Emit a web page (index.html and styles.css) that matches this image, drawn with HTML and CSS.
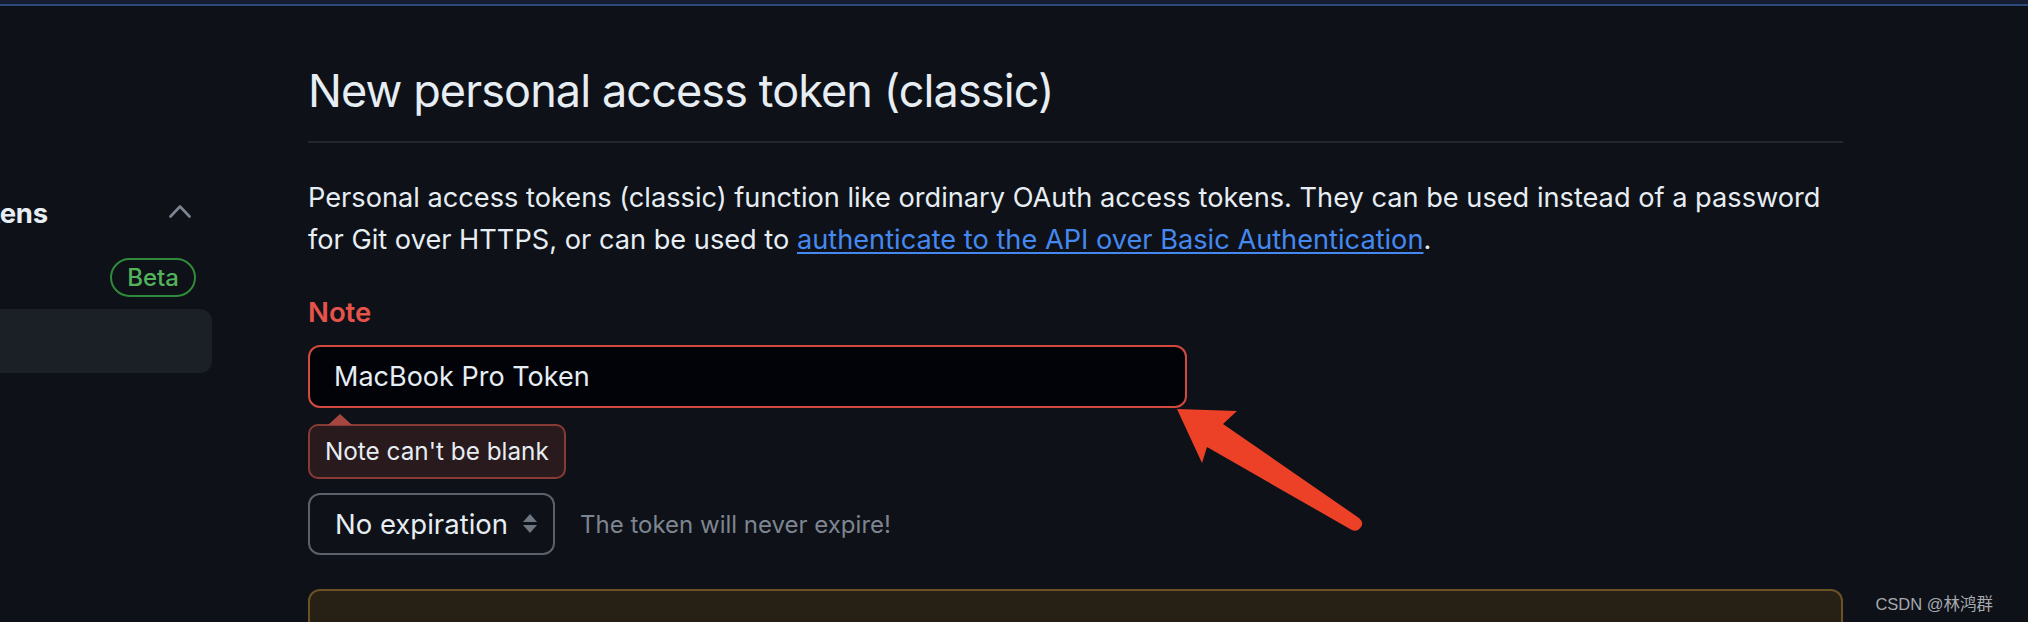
FILE: index.html
```html
<!DOCTYPE html>
<html lang="en">
<head>
<meta charset="utf-8">
<title>New personal access token (classic)</title>
<link rel="stylesheet" href="styles.css">
</head>
<body>
<div class="topbar"></div>
<div class="layout">
  <nav class="sidebar">
    <div class="nav-row nav-head">
      <span class="nav-label head-label"><span>Personal access tokens</span></span>
      <svg class="chev" width="22" height="14" viewBox="0 0 22 14"><polyline points="1.5,12.5 11,2.5 20.5,12.5" fill="none" stroke="#7d8590" stroke-width="2.6" stroke-linecap="round" stroke-linejoin="round"/></svg>
    </div>
    <div class="nav-row">
      <span class="badge">Beta</span>
    </div>
    <div class="nav-row nav-selected"></div>
  </nav>
  <main class="main">
    <h1 class="subhead">New personal access token (classic)</h1>
    <p class="intro">Personal access tokens (classic) function like ordinary OAuth access tokens. They can be used instead of a password for Git over HTTPS, or can be used to <a href="#">authenticate to the API over Basic Authentication</a>.</p>
    <div class="form-group">
      <label class="field-label" for="note">Note</label>
      <input id="note" class="text-input" type="text" value="MacBook Pro Token">
      <div class="error-row"><div class="error-tip">Note can't be blank</div></div>
    </div>
    <div class="expiry-row">
      <div class="select-box">
        <span>No expiration</span>
        <svg class="select-arrows" width="14" height="20" viewBox="0 0 14 20"><polygon points="7,0 14,8 0,8" fill="#6e7681"/><polygon points="0,11 14,11 7,19" fill="#6e7681"/></svg>
      </div>
      <span class="hint">The token will never expire!</span>
    </div>
    <div class="flash-warn"></div>
  </main>
</div>
<svg class="annotation" width="2028" height="622" viewBox="0 0 2028 622">
  <path d="M1177 409 L1237 411 L1223 424 L1359 518 Q1366 524 1358 530 Q1354 532 1350 529 L1207 447 L1202 463 Z" fill="#ec4127"/>
</svg>
<div class="watermark">CSDN @林鸿群</div>
</body>
</html>
```
FILE: styles.css
```css
html, body {
  margin: 0;
  padding: 0;
}
body {
  background: #0e1117;
  color: #e6edf3;
  font-family: Inter, "Liberation Sans", sans-serif;
  overflow: hidden;
  height: 622px;
  position: relative;
}
.topbar {
  height: 4px;
  background: #161d30;
  border-bottom: 2px solid #2d4a7c;
}
.layout {
  display: flex;
  align-items: flex-start;
}
.sidebar {
  flex: none;
  width: 512px;
  margin-left: -300px;
  padding-top: 175px;
  display: flex;
  flex-direction: column;
}
.nav-row {
  height: 64px;
  display: flex;
  align-items: center;
  border-radius: 12px;
}
.nav-label {
  display: flex;
  justify-content: flex-end;
  overflow: hidden;
  white-space: nowrap;
  flex: none;
}
.head-label {
  width: 348px;
  font-size: 27.5px;
  font-weight: 700;
  color: #e6edf3;
  letter-spacing: -0.2px;
}
.chev {
  margin-left: auto;
  margin-right: 21px;
  margin-top: -4px;
}
.badge {
  margin-left: auto;
  margin-right: 16px;
  height: 39px;
  box-sizing: border-box;
  border: 2px solid #2f8a3a;
  border-radius: 20px;
  padding: 0 15px;
  font-size: 24px;
  font-weight: 500;
  line-height: 35px;
  color: #52b35b;
}
.nav-selected {
  background: #1b1f26;
}
.main {
  flex: none;
  width: 1535px;
  margin-left: 96px;
  padding-top: 55px;
}
.subhead {
  margin: 0;
  font-size: 45px;
  font-weight: 400;
  line-height: 60px;
  letter-spacing: -0.9px;
  padding-bottom: 20px;
  border-bottom: 2px solid #22262d;
  color: #e6edf3;
}
.intro {
  margin: 34px 0 0;
  font-size: 27.2px;
  line-height: 42px;
  color: #e6edf3;
}
.intro a {
  color: #4589f0;
  text-decoration: underline;
  text-underline-offset: 3px;
  text-decoration-thickness: 2px;
}
.form-group {
  margin-top: 30px;
  display: flex;
  flex-direction: column;
  align-items: flex-start;
}
.field-label {
  font-size: 27.5px;
  font-weight: 600;
  line-height: 42px;
  color: #e5534b;
}
.text-input {
  margin-top: 12px;
  width: 879px;
  height: 63px;
  box-sizing: border-box;
  border: 2px solid #d2493f;
  border-radius: 12px;
  background: #020308;
  color: #e6edf3;
  padding: 0 24px;
  font-family: Inter, "Liberation Sans", sans-serif;
  font-size: 27px;
  outline: none;
}
.error-row {
  margin-top: 16px;
  display: flex;
}
.error-tip {
  position: relative;
  background: #291a1d;
  border: 2px solid #8a3a35;
  border-radius: 10px;
  padding: 8px 15px;
  font-size: 24.3px;
  line-height: 35px;
  color: #e6edf3;
}
.error-tip::before {
  content: "";
  position: absolute;
  left: 18px;
  top: -12px;
  border-left: 12px solid transparent;
  border-right: 12px solid transparent;
  border-bottom: 11px solid #a64640;
}
.expiry-row {
  margin-top: 14px;
  display: flex;
  align-items: center;
}
.select-box {
  height: 62px;
  width: 247px;
  box-sizing: border-box;
  border: 2px solid #5a616a;
  border-radius: 12px;
  padding: 0 16px 0 25px;
  display: flex;
  align-items: center;
  justify-content: space-between;
  font-size: 27.5px;
  color: #e6edf3;
}
.select-arrows {
  flex: none;
}
.hint {
  margin-left: 25px;
  font-size: 24px;
  color: #7d8590;
}
.flash-warn {
  margin-top: 34px;
  height: 140px;
  box-sizing: border-box;
  background: #272115;
  border: 2px solid #6b5124;
  border-radius: 12px;
}
.annotation {
  position: absolute;
  left: 0;
  top: 0;
  pointer-events: none;
}
.watermark {
  position: absolute;
  right: 35px;
  bottom: 7px;
  font-family: "Liberation Sans", "Noto Sans CJK SC", sans-serif;
  font-size: 16.5px;
  color: #a6aaaf;
}
```
